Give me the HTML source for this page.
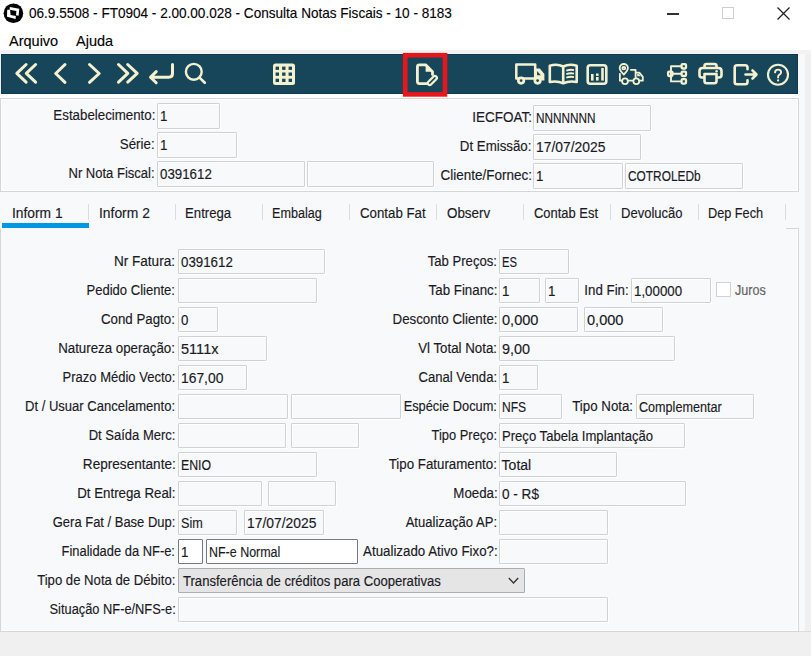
<!DOCTYPE html>
<html><head><meta charset="utf-8">
<style>
*{box-sizing:border-box;margin:0;padding:0}
html,body{width:811px;height:656px;overflow:hidden}
body{position:relative;background:#f0f0f0;font-family:"Liberation Sans",sans-serif;font-size:14px;color:#1a1a24;-webkit-text-stroke:0.15px #1a1a24}
.a{position:absolute}
.lb{position:absolute;white-space:nowrap;text-align:right;height:25px;line-height:25px}
.bx{position:absolute;height:25px;border:1px solid #d2d2d2;box-shadow:inset 1px 1px 0 #fff,1px 1px 0 #fff;border-radius:1px;background:#f8f9fb;padding-left:1.6px;line-height:23px;white-space:nowrap;overflow:hidden}
.wh{background:#fff;border-color:#7a7a7a;box-shadow:none}
.cb{background:#e5e5e5;border-color:#adadad;box-shadow:none;padding-left:4px}
.tab{position:absolute;top:201px;height:24px;line-height:24px;white-space:nowrap}
.sep{position:absolute;top:204px;width:1px;height:16px;background:#dcdcdc}
svg{position:absolute;overflow:visible}
.lb span{display:inline-block;transform:scaleX(.95);transform-origin:100% 50%}
.tab span{display:inline-block;transform:scaleX(.95);transform-origin:0 50%}
.bx span{display:inline-block;transform:scaleX(.95);transform-origin:0 50%}
</style></head><body>
<!-- title + menu -->
<div class="a" style="left:0;top:0;width:811px;height:50px;background:#fff"></div>
<div class="a" style="left:0;top:50px;width:811px;height:4px;background:#f2f2f2"></div>
<svg style="left:0;top:0" width="30" height="30" viewBox="0 0 30 30">
  <circle cx="13.4" cy="13.2" r="9.8" fill="#000"/>
  <path d="M9.8 6.9L19.3 8.8L18.6 15.7L16.0 15.3L16.4 11.0L9.6 9.8Z" fill="#fff"/>
  <path d="M7.2 9.8L10.1 9.8L10.6 15.0L15.9 16.1L15.6 19.0L7.0 16.8Z" fill="#fff"/>
</svg>
<div class="a" style="left:29px;top:4px;font-size:15px;line-height:18px;color:#000;white-space:nowrap;transform:scaleX(0.904);transform-origin:0 0">06.9.5508 - FT0904 - 2.00.00.028 - Consulta Notas Fiscais - 10 - 8183</div>
<div class="a" style="left:667px;top:13px;width:12px;height:1.5px;background:#333"></div>
<div class="a" style="left:722px;top:7px;width:12px;height:12px;border:1px solid #cfcfcf"></div>
<svg style="left:777px;top:7px" width="13" height="13" viewBox="0 0 13 13"><path d="M0.5 0.5L12.5 12.5M12.5 0.5L0.5 12.5" stroke="#222" stroke-width="1.3"/></svg>
<div class="a" style="left:9px;top:32px;font-size:14.5px;line-height:18px;color:#000">Arquivo</div>
<div class="a" style="left:76px;top:32px;font-size:14.5px;line-height:18px;color:#000">Ajuda</div>

<!-- toolbar -->
<div class="a" style="left:0;top:94px;width:799px;height:4px;background:#fff"></div>
<div class="a" style="left:1px;top:54px;width:797px;height:40px;background:#17465a;border:1px solid #0b3a52"></div>
<div class="a" style="left:798px;top:54px;width:7px;height:577px;background:#f8f9fb"></div>
<svg style="left:0;top:0" width="811" height="100" viewBox="0 0 811 100">
<g fill="none" stroke="#f5f1cf" stroke-width="3" stroke-linecap="round" stroke-linejoin="round">
  <path d="M26.1 64.5L16.8 73.3L26.1 82.1M35.6 64.5L26.3 73.3L35.6 82.1"/>
  <path d="M65 64.5L55.7 73.5L65 82.3"/>
  <path d="M89.5 64.5L99.2 73.5L89.5 82.3"/>
  <path d="M118.5 64.5L127.8 73.3L118.5 82.1M127.7 64.5L137.2 73.3L127.7 82.1"/>
  <path d="M172.5 64.5V73.5Q172.5 77.2 168.8 77.2H151M156.2 71.6L150.5 77.2L156.2 82.8"/>
  <circle cx="193.8" cy="71.8" r="7.9" stroke-width="2.4"/>
  <path d="M199.5 77.6L204.8 82.8" stroke-width="2.6"/>
</g>
<!-- grid -->
<rect x="273" y="63.5" width="22" height="21.5" rx="2.5" fill="#f5f1cf"/>
<rect x="275.6" y="66.6" width="3.4" height="3.3" fill="#17465a"/><rect x="282.1" y="66.6" width="3.4" height="3.3" fill="#17465a"/><rect x="288.6" y="66.6" width="3.4" height="3.3" fill="#17465a"/><rect x="275.6" y="72.5" width="3.4" height="3.3" fill="#17465a"/><rect x="282.1" y="72.5" width="3.4" height="3.3" fill="#17465a"/><rect x="288.6" y="72.5" width="3.4" height="3.3" fill="#17465a"/><rect x="275.6" y="78.7" width="3.4" height="3.3" fill="#17465a"/><rect x="282.1" y="78.7" width="3.4" height="3.3" fill="#17465a"/><rect x="288.6" y="78.7" width="3.4" height="3.3" fill="#17465a"/>
<!-- red highlight -->
<rect x="405.2" y="55.2" width="39.8" height="39.2" fill="none" stroke="#e8161b" stroke-width="4.6"/>
<!-- doc edit icon -->
<g fill="none" stroke="#f5f1cf" stroke-width="2.8" stroke-linejoin="round" stroke-linecap="round">
  <path d="M427 83.6H419.4Q417.4 83.6 417.4 81.6V66.8Q417.4 64.8 419.4 64.8H425.6L432.5 71.7V74.5"/>
</g>
<path d="M425.6 64.8V71.7H432.5Z" fill="#f5f1cf"/>
<rect x="-5.6" y="-1.9" width="11.2" height="3.8" rx="1.9" transform="translate(432.3 80.5) rotate(-45)" fill="none" stroke="#f5f1cf" stroke-width="2.3"/>
<!-- truck -->
<g fill="none" stroke="#f5f1cf" stroke-width="2.5" stroke-linejoin="round">
  <path d="M516.3 64.5H535.2V78.6H516.3Z"/>
  <circle cx="521.1" cy="80.6" r="2.75" fill="#17465a" stroke-width="2.7"/>
</g>
<path fill-rule="evenodd" fill="#f5f1cf" d="M534.8 68.6H539.8L544.4 74.1V80.6H534.8ZM537.1 71.1V75.3H540.8Z"/>
<circle cx="537.6" cy="80.6" r="2.75" fill="#17465a" stroke="#f5f1cf" stroke-width="2.7"/>
<!-- book -->
<g fill="none" stroke="#f5f1cf" stroke-width="2.6" stroke-linejoin="round">
  <path d="M563.2 83.2Q557 80.5 549.8 82V65.8Q557 63.5 563.2 66.5Q569.5 63.5 576.7 65.8V82Q569.5 80.5 563.2 83.2Z"/>
  <path d="M563.2 66.5V82.5"/>
</g>
<g fill="none" stroke="#f5f1cf" stroke-width="1.9">
  <path d="M566.3 70.6Q570.5 69.1 574 70.1M566.3 74.1Q570.5 72.6 574 73.6M566.3 77.7Q570.5 76.2 574 77.2"/>
</g>
<!-- chart -->
<rect x="587.7" y="65.2" width="18.6" height="18.6" rx="2.5" fill="none" stroke="#f5f1cf" stroke-width="2.6"/>
<g fill="#f5f1cf">
  <rect x="591" y="74" width="2.6" height="6.6"/>
  <rect x="596" y="73.5" width="2.6" height="2.4"/>
  <rect x="596" y="77" width="2.6" height="3.6"/>
  <rect x="601.2" y="68" width="2.6" height="12.6"/>
</g>
<!-- location truck -->
<g fill="none" stroke="#f5f1cf" stroke-width="1.8" stroke-linejoin="round" stroke-linecap="round">
  <path d="M623.8 74.6Q619.7 70.6 619.7 68.1A4.1 4.1 0 0 1 627.9 68.1Q627.9 70.6 623.8 74.6Z"/>
  <ellipse cx="623.8" cy="68.2" rx="1.5" ry="1.2"/>
  <path d="M619.9 73.8V80.7H621.9M628.1 80.7H633.2M639.4 80.7H642.8V76.8L639.3 72.6H635.6M630.9 69.8H635.6V78"/>
  <circle cx="625" cy="81.2" r="2.9"/>
  <circle cx="636.3" cy="81.2" r="2.9"/>
</g>
<path d="M637.2 73.8H638.8L640.6 76.2H637.2Z" fill="#f5f1cf"/>
<!-- hierarchy -->
<g fill="none" stroke="#f5f1cf" stroke-width="1.9" stroke-linejoin="round">
  <path d="M673 73.8H681.4M681.4 66.3H671V81.4H681.4M671 66.3V71"/>
</g>
<g fill="none" stroke="#f5f1cf" stroke-width="2.3" stroke-linejoin="round">
  <rect x="668.1" y="71.6" width="4.4" height="4.4" rx="1"/>
  <rect x="681.6" y="64.1" width="4.4" height="4.4" rx="1"/>
  <rect x="681.6" y="71.6" width="4.4" height="4.4" rx="1"/>
  <rect x="681.6" y="79.2" width="4.4" height="4.4" rx="1"/>
</g>
<!-- printer -->
<g fill="none" stroke="#f5f1cf" stroke-width="2.6" stroke-linejoin="round">
  <path d="M704.5 68V66Q704.5 64 706.5 64H714.5Q716.5 64 716.5 66V68"/>
  <path d="M704.5 77.5H702Q699.5 77.5 699.5 75V71Q699.5 68 702.5 68H718.5Q721.5 68 721.5 71V75Q721.5 77.5 719 77.5H716.5"/>
  <path d="M704.5 74H716.5V81Q716.5 83.3 714.2 83.3H706.8Q704.5 83.3 704.5 81Z"/>
</g>
<circle cx="716.6" cy="71.2" r="1.2" fill="#f5f1cf"/>
<!-- exit -->
<g fill="none" stroke="#f5f1cf" stroke-width="2.6" stroke-linejoin="round" stroke-linecap="round">
  <path d="M747.5 69.2V67.5Q747.5 65.2 745.2 65.2H737Q734.7 65.2 734.7 67.5V82Q734.7 84.3 737 84.3H745.2Q747.5 84.3 747.5 82V80.2"/>
  <path d="M745.5 74.5H756.5M752.5 70.5L756.5 74.5L752.5 78.5"/>
</g>
<!-- help -->
<circle cx="778" cy="74.7" r="10" fill="none" stroke="#f5f1cf" stroke-width="2.1"/>
<path d="M775.1 72.4Q775.1 69.6 778.1 69.6Q781.1 69.6 781.1 72.2Q781.1 74 779.2 74.9Q778.1 75.5 778.1 77V77.6" fill="none" stroke="#f5f1cf" stroke-width="1.9" stroke-linecap="round"/>
<circle cx="778.1" cy="80.4" r="1.1" fill="#f5f1cf"/>
</svg>


<!-- header panel -->
<div class="a" style="left:0;top:98px;width:799px;height:94px;border:1px solid #d6d6d6;background:#f8f9fb;box-shadow:inset -1px -1px 0 #fff,inset 1px 1px 0 #fff"></div>
<!-- tabs region -->
<div class="a" style="left:0;top:192px;width:798px;height:37px;background:#f8f9fb"></div>
<!-- content panel -->
<div class="a" style="left:0;top:229px;width:799px;height:403px;border:1px solid #d6d6d6;border-top:none;background:#f8f9fb;box-shadow:inset -1px -1px 0 #fff"></div>
<div class="a" style="left:786px;top:228px;width:13px;height:1px;background:#d6d6d6"></div>
<div class="a" style="left:799px;top:631px;width:12px;height:1px;background:#dcdcdc"></div>
<!--FORM-->
<div class="lb" style="left:0;width:155.0px;top:102px;height:26px;line-height:26px;"><span>Estabelecimento:</span></div>
<div class="bx" style="left:157px;top:103px;width:63px;height:26px;line-height:24px;"><span>1</span></div>
<div class="lb" style="left:0;width:155.0px;top:131px;height:26px;line-height:26px;"><span>Série:</span></div>
<div class="bx" style="left:157px;top:132px;width:80px;height:26px;line-height:24px;"><span>1</span></div>
<div class="lb" style="left:0;width:155.0px;top:160px;height:26px;line-height:26px;"><span style="transform:scaleX(0.93)">Nr Nota Fiscal:</span></div>
<div class="bx" style="left:157px;top:161px;width:148px;height:26px;line-height:24px;"><span>0391612</span></div>
<div class="bx" style="left:307px;top:161px;width:127px;height:26px;line-height:24px;"><span></span></div>
<div class="lb" style="left:0;width:531.5px;top:104px;height:26px;line-height:26px;"><span style="transform:scaleX(0.965)">IECFOAT:</span></div>
<div class="bx" style="left:533px;top:105px;width:118px;height:26px;line-height:24px;"><span style="transform:scaleX(0.84)">NNNNNNN</span></div>
<div class="lb" style="left:0;width:531.5px;top:133px;height:26px;line-height:26px;"><span>Dt Emissão:</span></div>
<div class="bx" style="left:533px;top:134px;width:108px;height:26px;line-height:24px;"><span style="transform:scaleX(0.99)">17/07/2025</span></div>
<div class="lb" style="left:0;width:531.5px;top:162px;height:26px;line-height:26px;"><span style="transform:scaleX(0.962)">Cliente/Fornec:</span></div>
<div class="bx" style="left:533px;top:163px;width:90px;height:26px;line-height:24px;"><span>1</span></div>
<div class="bx" style="left:625px;top:163px;width:118px;height:26px;line-height:24px;"><span style="transform:scaleX(0.85)">COTROLEDb</span></div>
<div class="tab" style="left:11.9px"><span style="transform:scaleX(0.986)">Inform 1</span></div>
<div class="sep" style="left:88.1px"></div>
<div class="tab" style="left:98.7px"><span style="transform:scaleX(0.99)">Inform 2</span></div>
<div class="sep" style="left:175.1px"></div>
<div class="tab" style="left:185.1px"><span style="transform:scaleX(0.942)">Entrega</span></div>
<div class="sep" style="left:262.2px"></div>
<div class="tab" style="left:272.1px"><span style="transform:scaleX(0.9)">Embalag</span></div>
<div class="sep" style="left:349.2px"></div>
<div class="tab" style="left:359.9px"><span style="transform:scaleX(0.947)">Contab Fat</span></div>
<div class="sep" style="left:436.3px"></div>
<div class="tab" style="left:446.5px"><span style="transform:scaleX(0.957)">Observ</span></div>
<div class="sep" style="left:523.4px"></div>
<div class="tab" style="left:534.0px"><span style="transform:scaleX(0.924)">Contab Est</span></div>
<div class="sep" style="left:610.4px"></div>
<div class="tab" style="left:620.6px"><span style="transform:scaleX(0.931)">Devolucão</span></div>
<div class="sep" style="left:697.5px"></div>
<div class="tab" style="left:707.7px"><span style="transform:scaleX(0.908)">Dep Fech</span></div>
<div class="sep" style="left:784.5px"></div>
<div class="a" style="left:2px;top:223px;width:87px;height:5px;background:#0097e4"></div>
<div class="lb" style="left:0;width:175.3px;top:249px;height:25px;line-height:25px;"><span style="transform:scaleX(0.97)">Nr Fatura:</span></div>
<div class="bx" style="left:178px;top:249px;width:147px;height:25px;line-height:23px;padding-top:1px"><span>0391612</span></div>
<div class="lb" style="left:0;width:175.3px;top:278px;height:25px;line-height:25px;"><span style="transform:scaleX(0.932)">Pedido Cliente:</span></div>
<div class="bx" style="left:178px;top:278px;width:139px;height:25px;line-height:23px;padding-top:1px"><span></span></div>
<div class="lb" style="left:0;width:175.3px;top:307px;height:25px;line-height:25px;"><span>Cond Pagto:</span></div>
<div class="bx" style="left:178px;top:307px;width:40px;height:25px;line-height:23px;padding-top:1px"><span>0</span></div>
<div class="lb" style="left:0;width:175.3px;top:336px;height:25px;line-height:25px;"><span>Natureza operação:</span></div>
<div class="bx" style="left:178px;top:336px;width:89px;height:25px;line-height:23px;padding-top:1px"><span style="transform:scaleX(1.04)">5111x</span></div>
<div class="lb" style="left:0;width:175.3px;top:365px;height:25px;line-height:25px;"><span style="transform:scaleX(0.93)">Prazo Médio Vecto:</span></div>
<div class="bx" style="left:178px;top:365px;width:69px;height:25px;line-height:23px;padding-top:1px"><span style="transform:scaleX(0.99)">167,00</span></div>
<div class="lb" style="left:0;width:175.3px;top:394px;height:25px;line-height:25px;"><span style="transform:scaleX(0.932)">Dt / Usuar Cancelamento:</span></div>
<div class="bx" style="left:178px;top:394px;width:110px;height:25px;line-height:23px;padding-top:1px"><span></span></div>
<div class="bx" style="left:291px;top:394px;width:110px;height:25px;line-height:23px;padding-top:1px"><span></span></div>
<div class="lb" style="left:0;width:175.3px;top:423px;height:25px;line-height:25px;"><span style="transform:scaleX(0.928)">Dt Saída Merc:</span></div>
<div class="bx" style="left:178px;top:423px;width:108px;height:25px;line-height:23px;padding-top:1px"><span></span></div>
<div class="bx" style="left:291px;top:423px;width:68px;height:25px;line-height:23px;padding-top:1px"><span></span></div>
<div class="lb" style="left:0;width:175.3px;top:452px;height:25px;line-height:25px;"><span style="transform:scaleX(0.97)">Representante:</span></div>
<div class="bx" style="left:178px;top:452px;width:139px;height:25px;line-height:23px;padding-top:1px"><span style="transform:scaleX(0.88)">ENIO</span></div>
<div class="lb" style="left:0;width:175.3px;top:481px;height:25px;line-height:25px;"><span>Dt Entrega Real:</span></div>
<div class="bx" style="left:178px;top:481px;width:84px;height:25px;line-height:23px;padding-top:1px"><span></span></div>
<div class="bx" style="left:268px;top:481px;width:68px;height:25px;line-height:23px;padding-top:1px"><span></span></div>
<div class="lb" style="left:0;width:175.3px;top:510px;height:25px;line-height:25px;"><span style="transform:scaleX(0.926)">Gera Fat / Base Dup:</span></div>
<div class="bx" style="left:178px;top:510px;width:59px;height:25px;line-height:23px;padding-top:1px"><span style="transform:scaleX(0.9)">Sim</span></div>
<div class="bx" style="left:244px;top:510px;width:80px;height:25px;line-height:23px;padding-top:1px"><span style="transform:scaleX(0.99)">17/07/2025</span></div>
<div class="lb" style="left:0;width:175.3px;top:539px;height:25px;line-height:25px;"><span style="transform:scaleX(0.922)">Finalidade da NF-e:</span></div>
<div class="bx wh" style="left:178px;top:539px;width:25px;height:25px;line-height:23px;padding-top:1px"><span>1</span></div>
<div class="bx wh" style="left:206px;top:539px;width:152px;height:25px;line-height:23px;padding-top:1px"><span style="transform:scaleX(0.89)">NF-e Normal</span></div>
<div class="lb" style="left:0;width:175.3px;top:568px;height:25px;line-height:25px;"><span style="transform:scaleX(0.938)">Tipo de Nota de Débito:</span></div>
<div class="lb" style="left:0;width:175.3px;top:597px;height:25px;line-height:25px;"><span style="transform:scaleX(0.916)">Situação NF-e/NFS-e:</span></div>
<div class="bx" style="left:178px;top:597px;width:430px;height:25px;line-height:23px;padding-top:1px"><span></span></div>
<div class="bx cb" style="left:178px;top:568px;width:347px;height:25px;line-height:23px;padding-top:1px"><span style="transform:scaleX(.935)">Transferência de créditos para Cooperativas</span></div>
<svg style="left:508px;top:577px" width="11" height="8" viewBox="0 0 11 8"><path d="M0.8 1L5.5 6L10.2 1" fill="none" stroke="#333" stroke-width="1.3"/></svg>
<div class="lb" style="left:0;width:497.3px;top:249px;height:25px;line-height:25px;"><span style="transform:scaleX(0.936)">Tab Preços:</span></div>
<div class="bx" style="left:499px;top:249px;width:70px;height:25px;line-height:23px;padding-top:1px"><span style="transform:scaleX(0.8)">ES</span></div>
<div class="lb" style="left:0;width:497.3px;top:278px;height:25px;line-height:25px;"><span>Tab Financ:</span></div>
<div class="bx" style="left:499px;top:278px;width:41px;height:25px;line-height:23px;padding-top:1px"><span>1</span></div>
<div class="bx" style="left:545px;top:278px;width:34px;height:25px;line-height:23px;padding-top:1px"><span>1</span></div>
<div class="bx" style="left:631px;top:278px;width:80px;height:25px;line-height:23px;padding-top:1px"><span>1,00000</span></div>
<div class="lb" style="left:0;width:497.3px;top:307px;height:25px;line-height:25px;"><span>Desconto Cliente:</span></div>
<div class="bx" style="left:499px;top:307px;width:79px;height:25px;line-height:23px;padding-top:1px"><span style="transform:scaleX(1.04)">0,000</span></div>
<div class="bx" style="left:584px;top:307px;width:79px;height:25px;line-height:23px;padding-top:1px"><span style="transform:scaleX(1.04)">0,000</span></div>
<div class="lb" style="left:0;width:497.3px;top:336px;height:25px;line-height:25px;"><span>Vl Total Nota:</span></div>
<div class="bx" style="left:499px;top:336px;width:176px;height:25px;line-height:23px;padding-top:1px"><span style="transform:scaleX(1.03)">9,00</span></div>
<div class="lb" style="left:0;width:497.3px;top:365px;height:25px;line-height:25px;"><span style="transform:scaleX(0.935)">Canal Venda:</span></div>
<div class="bx" style="left:499px;top:365px;width:39px;height:25px;line-height:23px;padding-top:1px"><span>1</span></div>
<div class="lb" style="left:0;width:497.3px;top:394px;height:25px;line-height:25px;"><span style="transform:scaleX(0.915)">Espécie Docum:</span></div>
<div class="bx" style="left:499px;top:394px;width:63px;height:25px;line-height:23px;padding-top:1px"><span style="transform:scaleX(0.86)">NFS</span></div>
<div class="bx" style="left:636px;top:394px;width:118px;height:25px;line-height:23px;padding-top:1px"><span style="transform:scaleX(0.9)">Complementar</span></div>
<div class="lb" style="left:0;width:497.3px;top:423px;height:25px;line-height:25px;"><span style="transform:scaleX(0.922)">Tipo Preço:</span></div>
<div class="bx" style="left:499px;top:423px;width:186px;height:25px;line-height:23px;padding-top:1px"><span style="transform:scaleX(0.935)">Preço Tabela Implantação</span></div>
<div class="lb" style="left:0;width:497.3px;top:452px;height:25px;line-height:25px;"><span>Tipo Faturamento:</span></div>
<div class="bx" style="left:499px;top:452px;width:118px;height:25px;line-height:23px;padding-top:1px"><span style="transform:scaleX(1.0)">Total</span></div>
<div class="lb" style="left:0;width:497.3px;top:481px;height:25px;line-height:25px;"><span>Moeda:</span></div>
<div class="bx" style="left:499px;top:481px;width:187px;height:25px;line-height:23px;padding-top:1px"><span style="transform:scaleX(0.97)">0 - R$</span></div>
<div class="lb" style="left:0;width:497.3px;top:510px;height:25px;line-height:25px;"><span style="transform:scaleX(0.932)">Atualização AP:</span></div>
<div class="bx" style="left:499px;top:510px;width:109px;height:25px;line-height:23px;padding-top:1px"><span></span></div>
<div class="lb" style="left:0;width:497.3px;top:539px;height:25px;line-height:25px;"><span>Atualizado Ativo Fixo?:</span></div>
<div class="bx" style="left:499px;top:539px;width:109px;height:25px;line-height:23px;padding-top:1px"><span></span></div>
<div class="lb" style="left:0;width:628.9px;top:278px;height:25px;line-height:25px;"><span>Ind Fin:</span></div>
<div class="lb" style="left:0;width:633.3px;top:394px;height:25px;line-height:25px;"><span>Tipo Nota:</span></div>
<div class="a" style="left:716px;top:282px;width:15px;height:15px;border:1.5px solid #d2d2d2;background:#fff"></div>
<div class="a" style="left:735px;top:278px;height:25px;line-height:25px;color:#6f6f6f"><span style="display:inline-block;transform:scaleX(.9);transform-origin:0 50%">Juros</span></div>
<!--/FORM-->
</body></html>
